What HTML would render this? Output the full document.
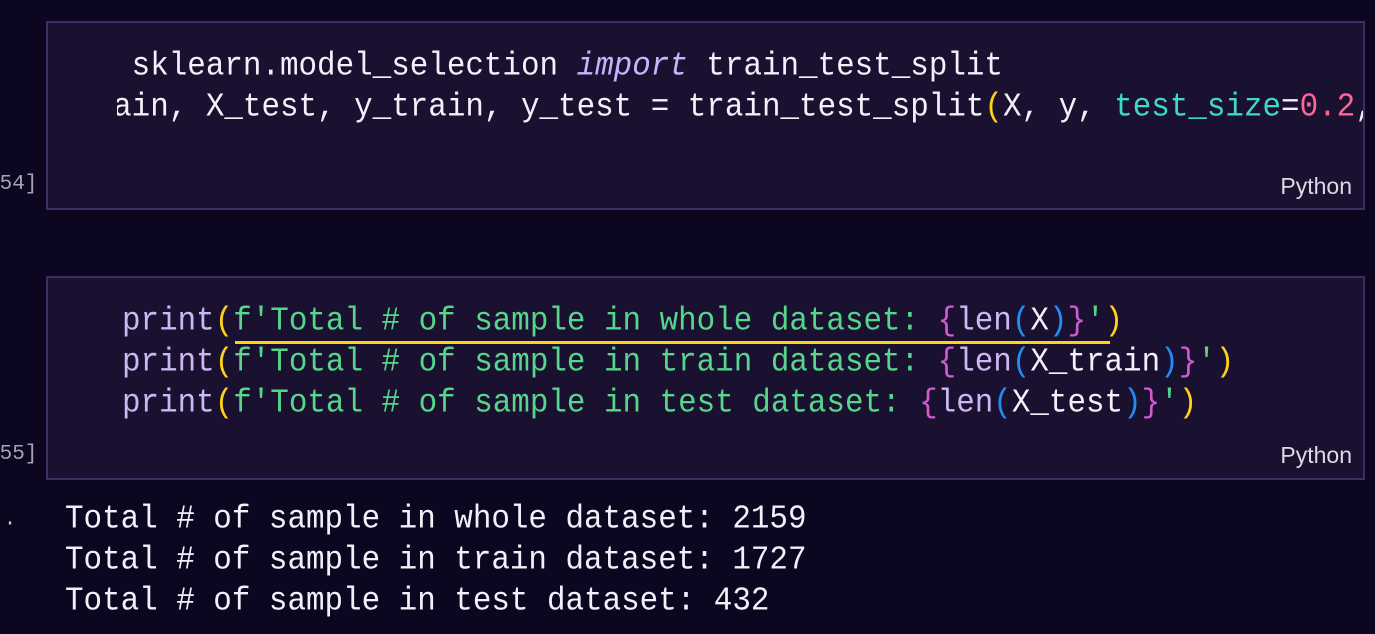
<!DOCTYPE html>
<html><head><meta charset="utf-8"><style>
html,body{margin:0;padding:0;background:#0c0620;width:1375px;height:634px;overflow:hidden;position:relative}
.cell{position:absolute;left:46px;width:1319px;background:#1a1130;border:2px solid #3c2f62;box-sizing:border-box}
.code{position:absolute;left:69px;right:0;top:0;bottom:0;overflow:hidden}
.ln{position:absolute;white-space:pre;font-family:"Liberation Mono","DejaVu Sans Mono",monospace;font-size:30.9px;line-height:41px;color:#f2f0f8;transform:scaleY(1.08);transform-origin:0 50%}
.py{position:absolute;right:11px;font-family:"Liberation Sans",sans-serif;font-size:23px;color:#dcdae4}
.cnt{position:absolute;left:-13px;font-family:"Liberation Mono",monospace;font-size:21px;color:#a8a2b8}
.k{color:#c9b3ff;font-style:italic}.p{color:#cdb6f4}.s{color:#55d68a}.b{color:#d35ad0}.bl{color:#1f8ff5}.y{color:#ffd21a}.c{color:#3fd8c8}.n{color:#ff6496}
</style></head><body>
<div class="cell" style="top:21px;height:189px">
 <div class="code">
  <div class="ln" style="left:-78px;top:23px">from sklearn.model_selection <span class="k">import</span> train_test_split</div>
  <div class="ln" style="left:-78px;top:64px">X_train, X_test, y_train, y_test = train_test_split<span class="y">(</span>X, y, <span class="c">test_size</span>=<span class="n">0.2</span>, random_state=42<span class="y">)</span></div>
 </div>
 <div class="py" style="top:150px">Python</div>
</div>
<div class="cnt" style="top:173px">[54]</div>
<div class="cell" style="top:276px;height:204px">
 <div class="code" style="left:74px">
  <div class="ln" style="left:0;top:23px"><span class="p">print</span><span class="y">(</span><span class="s">f'Total # of sample in whole dataset: </span><span class="b">{</span><span class="p">len</span><span class="bl">(</span>X<span class="bl">)</span><span class="b">}</span><span class="s">'</span><span class="y">)</span></div>
  <div style="position:absolute;left:113px;top:63px;width:875px;height:3px;background:#ffd21a"></div>
  <div class="ln" style="left:0;top:64px"><span class="p">print</span><span class="y">(</span><span class="s">f'Total # of sample in train dataset: </span><span class="b">{</span><span class="p">len</span><span class="bl">(</span>X_train<span class="bl">)</span><span class="b">}</span><span class="s">'</span><span class="y">)</span></div>
  <div class="ln" style="left:0;top:105px"><span class="p">print</span><span class="y">(</span><span class="s">f'Total # of sample in test dataset: </span><span class="b">{</span><span class="p">len</span><span class="bl">(</span>X_test<span class="bl">)</span><span class="b">}</span><span class="s">'</span><span class="y">)</span></div>
 </div>
 <div class="py" style="top:164px">Python</div>
</div>
<div class="cnt" style="top:443px">[55]</div>
<div class="ln" style="left:-8px;top:499px;color:#ccc;font-size:20px">..</div>
<div class="ln" style="left:65px;top:499px;color:#f2f0f8">Total # of sample in whole dataset: 2159</div>
<div class="ln" style="left:65px;top:540px;color:#f2f0f8">Total # of sample in train dataset: 1727</div>
<div class="ln" style="left:65px;top:581px;color:#f2f0f8">Total # of sample in test dataset: 432</div>
</body></html>
